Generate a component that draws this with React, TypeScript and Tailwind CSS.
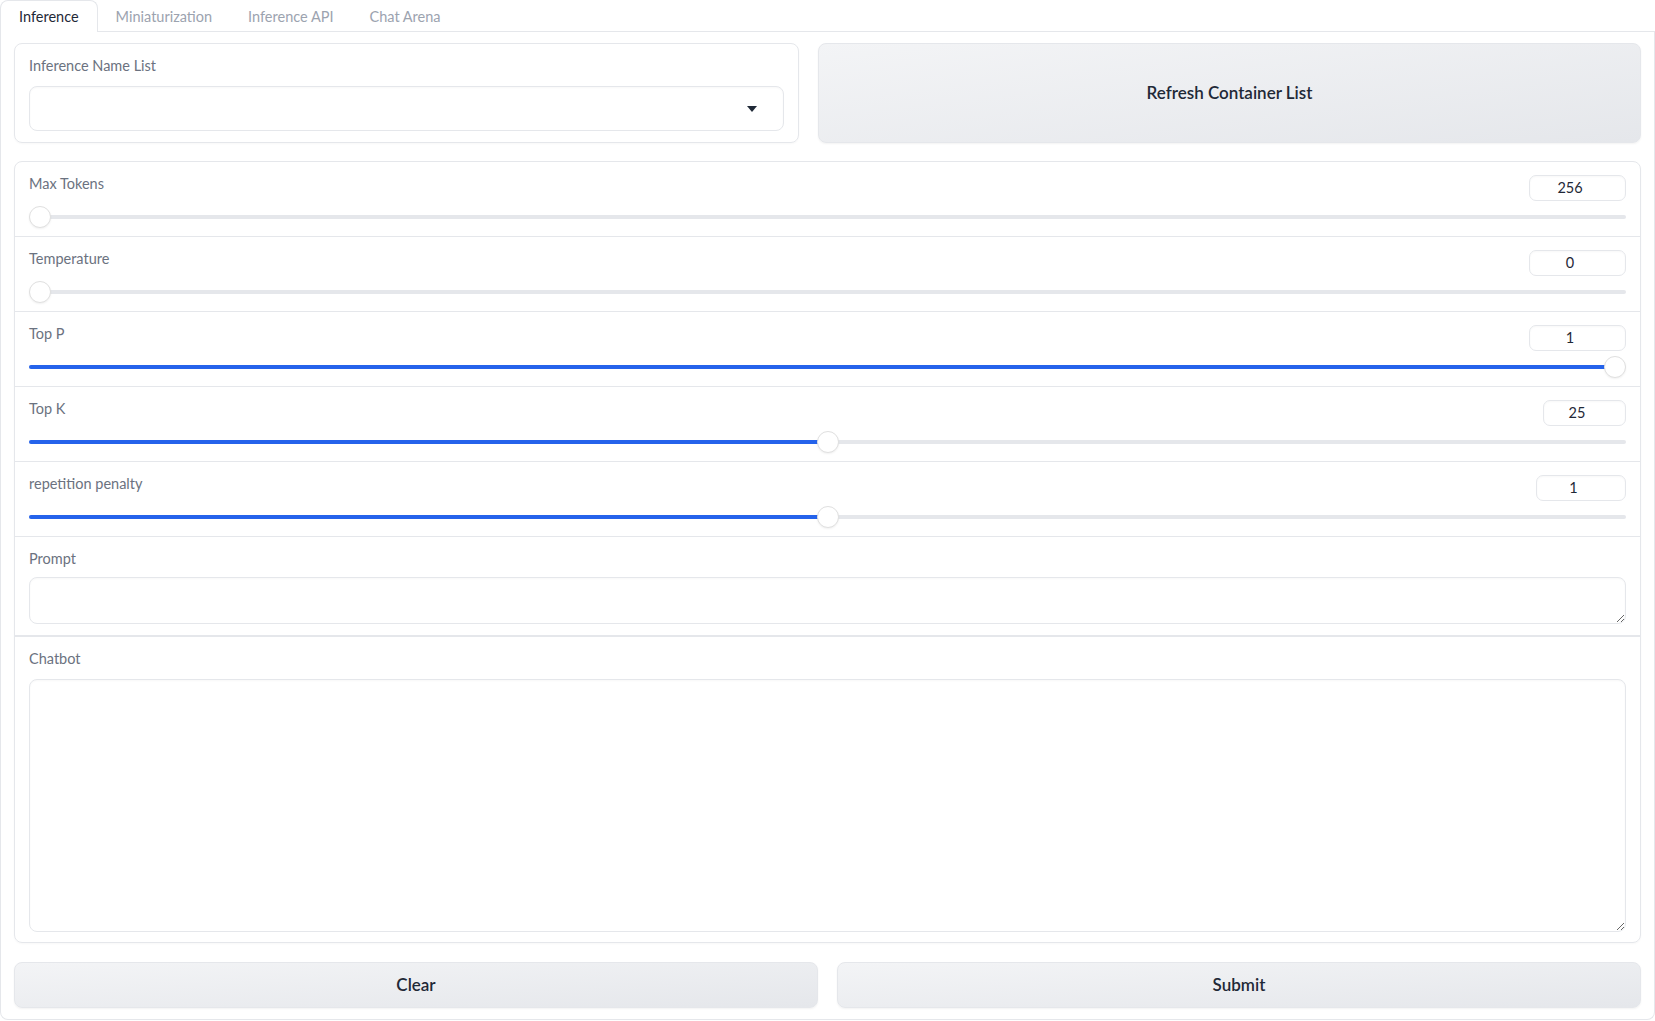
import { useState } from 'react'

const FONT = '[font-family:Lato,"Liberation_Sans",sans-serif]'

interface SliderRow {
  label:    string
  value:    string
  pct:      number
  boxWidth: string
}

const SLIDERS: SliderRow[] = [
  { label: 'Max Tokens',         value: '256', pct: 0,   boxWidth: 'w-[97px]' },
  { label: 'Temperature',        value: '0',   pct: 0,   boxWidth: 'w-[97px]' },
  { label: 'Top P',              value: '1',   pct: 100, boxWidth: 'w-[97px]' },
  { label: 'Top K',              value: '25',  pct: 50,  boxWidth: 'w-[83px]' },
  { label: 'repetition penalty', value: '1',   pct: 50,  boxWidth: 'w-[90px]' },
]

const TABS = ['Inference', 'Miniaturization', 'Inference API', 'Chat Arena']

function Slider({ row }: { row: SliderRow }) {
  // thumb travels inside the track so its edges line up with the track ends
  const left = `calc(${row.pct}% - ${(row.pct / 100) * 22}px)`
  const fill = `calc(${row.pct}% - ${(row.pct / 100) * 22}px + 11px)`

  return (
    <div className="h-[75px] border-b border-[#e5e7eb] px-[14px] pt-[12px]">
      <div className="flex items-start justify-between">
        <span className="text-[14.5px] leading-[20px] text-[#6b7280]">{row.label}</span>
        <div
          className={`${row.boxWidth} mt-[1px] flex h-[26px] items-center justify-center rounded-[7px] border border-[#e5e7eb] bg-white pr-[15px] text-[14.5px] text-[#1f2937] shadow-[inset_0_1px_2px_rgba(0,0,0,0.03)]`}
        >
          {row.value}
        </div>
      </div>
      <div className="relative mt-[14px] h-[4px] rounded-full bg-[#e5e7eb]">
        {row.pct > 0 && (
          <div className="absolute left-0 top-0 h-[4px] rounded-full bg-[#2563eb]" style={{ width: fill }} />
        )}
        <div
          className="absolute top-[-9px] h-[22px] w-[22px] rounded-full border border-[#e0e0e0] bg-white shadow-[0_1px_2px_rgba(0,0,0,0.06)]"
          style={{ left }}
        />
      </div>
    </div>
  )
}

export default function App() {
  const [tab, setTab] = useState('Inference')

  return (
    <div className={`h-[1021px] w-full bg-white ${FONT}`}>
      {/* Tabs */}
      <div className="flex h-[32px] border-b border-[#e5e7eb]">
        {TABS.map(t => (
          <button
            key={t}
            onClick={() => setTab(t)}
            className={
              t === tab
                ? 'relative -mb-px h-[32px] rounded-t-[8px] border border-b-0 border-[#e5e7eb] bg-white px-[18px] pt-[1px] text-[14.5px] text-[#1f2937]'
                : 'h-[31px] px-[18px] pt-[2px] text-[14.5px] text-[#9ca3af]'
            }
          >
            {t}
          </button>
        ))}
      </div>

      {/* Panel */}
      <div className="flex h-[988px] flex-col rounded-b-[8px] border-x border-b border-[#e5e7eb] px-[13px] pt-[11px]">
        <div className="flex h-[100px] gap-[19px]">
          <div className="w-[785px] rounded-[8px] border border-[#e5e7eb] px-[14px] pt-[12px] shadow-[0_1px_2px_rgba(0,0,0,0.03)]">
            <div className="text-[14.5px] leading-[20px] text-[#6b7280]">Inference Name List</div>
            <div className="mt-[10px] flex h-[45px] items-center justify-end rounded-[8px] border border-[#e5e7eb] pr-[26px] shadow-[inset_0_1px_2px_rgba(0,0,0,0.03)]">
              <svg width="10" height="6" viewBox="0 0 10 6">
                <path d="M0 0h10L5 6z" fill="#1f2937" />
              </svg>
            </div>
          </div>
          <button className="flex-1 rounded-[8px] border border-[#e5e7eb] bg-gradient-to-br from-[#f3f4f6] to-[#e5e7eb] text-[17px] font-semibold text-[#1f2937] shadow-[0_1px_2px_rgba(0,0,0,0.05)]">
            Refresh Container List
          </button>
        </div>

        <div className="mt-[18px] flex h-[782px] flex-col overflow-hidden rounded-[8px] border border-[#e5e7eb] shadow-[0_1px_2px_rgba(0,0,0,0.03)]">
          {SLIDERS.map(s => <Slider key={s.label} row={s} />)}

          <div className="h-[98px] px-[14px] pt-[12px]">
            <div className="text-[14.5px] leading-[20px] text-[#6b7280]">Prompt</div>
            <textarea
              className="mt-[8px] block h-[47px] w-full resize-y rounded-[8px] border border-[#e5e7eb] px-[12px] py-[10px] text-[14px] shadow-[inset_0_1px_2px_rgba(0,0,0,0.03)] outline-none"
            />
          </div>

          <div className="h-[2px] bg-[#e5e7eb]" />

          <div className="flex flex-1 flex-col px-[14px] pb-[10px] pt-[12px]">
            <div className="text-[14.5px] leading-[20px] text-[#6b7280]">Chatbot</div>
            <textarea
              className="mt-[10px] block w-full flex-1 resize-y rounded-[8px] border border-[#e5e7eb] px-[12px] py-[10px] text-[14px] shadow-[inset_0_1px_2px_rgba(0,0,0,0.03)] outline-none"
            />
          </div>
        </div>

        <div className="mt-[19px] flex h-[46px] gap-[19px]">
          <button className="flex-1 rounded-[8px] border border-[#e5e7eb] bg-gradient-to-br from-[#f3f4f6] to-[#e5e7eb] text-[17px] font-semibold text-[#1f2937] shadow-[0_1px_2px_rgba(0,0,0,0.05)]">
            Clear
          </button>
          <button className="flex-1 rounded-[8px] border border-[#e5e7eb] bg-gradient-to-br from-[#f3f4f6] to-[#e5e7eb] text-[17px] font-semibold text-[#1f2937] shadow-[0_1px_2px_rgba(0,0,0,0.05)]">
            Submit
          </button>
        </div>
      </div>
    </div>
  )
}
